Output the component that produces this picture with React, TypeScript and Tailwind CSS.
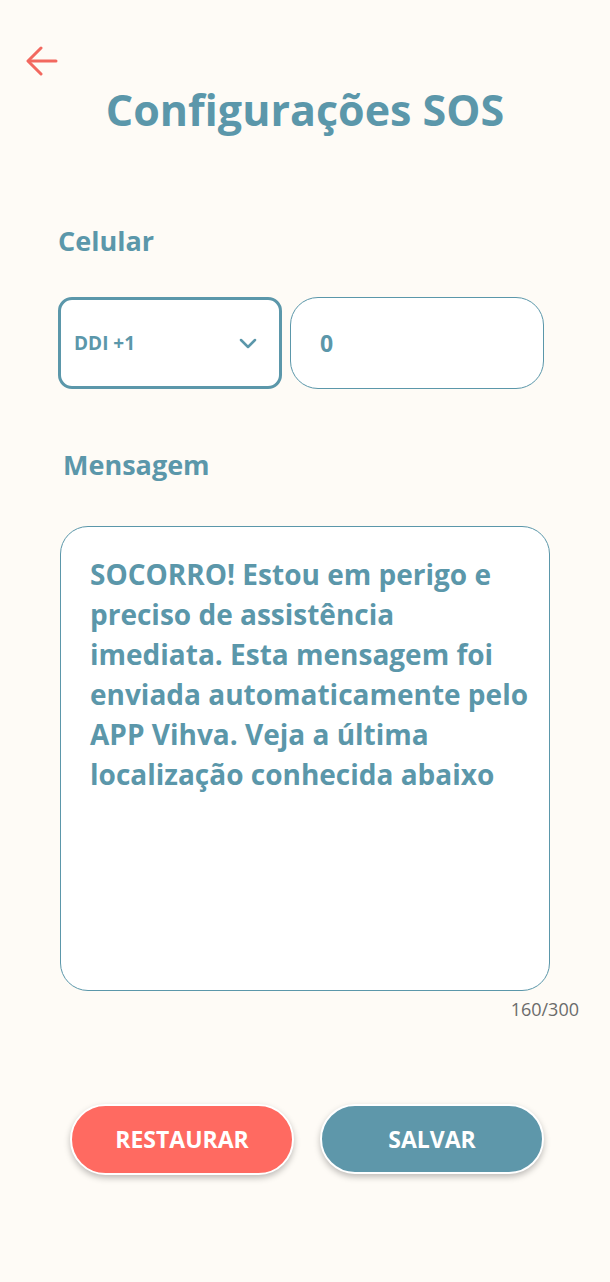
import React from "react";

const teal = "text-[#5b97aa]";

function BackArrow() {
  return (
    <svg width="34" height="30" viewBox="0 0 34 30" fill="none" stroke="#f2685f" strokeWidth="3" strokeLinecap="round" strokeLinejoin="round">
      <path d="M31 15H4" />
      <path d="M16 2L3 15l13 13" />
    </svg>
  );
}

function Chevron() {
  return (
    <svg width="18" height="12" viewBox="0 0 18 12" fill="none" stroke="#5b97aa" strokeWidth="2.5" strokeLinecap="round" strokeLinejoin="round">
      <path d="M2 3l7 7 7-7" />
    </svg>
  );
}

const lines = [
  "SOCORRO! Estou em perigo e",
  "preciso de assistência",
  "imediata. Esta mensagem foi",
  "enviada automaticamente pelo",
  "APP Vihva. Veja a última",
  "localização conhecida abaixo",
];

export default function App() {
  return (
    <div className="w-[610px] h-[1282px] bg-[#fefbf6] font-['Open_Sans',sans-serif] flex flex-col">
      <div className="pl-[25px] pt-[46px] h-[80px]">
        <BackArrow />
      </div>
      <h1 className={`text-center text-[43px] font-bold leading-none ${teal} mt-[8px]`}>
        Configurações SOS
      </h1>

      <div className={`ml-[58px] mt-[96px] text-[27px] font-bold leading-none ${teal}`}>Celular</div>

      <div className="flex ml-[58px] mt-[43px] gap-[8px]">
        <div className="w-[224px] h-[92px] bg-white border-[3px] border-[#5b97aa] rounded-[14px] flex items-center justify-between pl-[13px] pr-[22px]">
          <span className={`text-[19px] font-bold ${teal}`}>DDI +1</span>
          <Chevron />
        </div>
        <div className="w-[254px] h-[92px] bg-white border-[1.5px] border-[#5b97aa] rounded-[28px] flex items-center pl-[29px]">
          <span className={`text-[23px] font-bold ${teal}`}>0</span>
        </div>
      </div>

      <div className={`ml-[63px] mt-[62px] text-[27px] font-bold leading-none ${teal}`}>Mensagem</div>

      <div className="ml-[60px] mt-[48px] w-[490px] h-[465px] bg-white border-[1.5px] border-[#5b97aa] rounded-[28px] pl-[29px] pr-[10px] pt-[27px]">
        <p className={`text-[28px] font-bold leading-[40px] ${teal}`}>
          {lines.map((l, i) => (
            <React.Fragment key={i}>
              {l}
              {i < lines.length - 1 && <br />}
            </React.Fragment>
          ))}
        </p>
      </div>
      <div className="w-[579px] text-right text-[18px] text-[#6b6b6b] mt-[9px] leading-none">160/300</div>

      <div className="flex ml-[70px] mt-[86px] gap-[26px]">
        <button className="w-[224px] h-[71px] rounded-full bg-[#ff6a61] border-2 border-white text-white text-[23px] font-bold shadow-[0_3px_6px_rgba(0,0,0,0.25)]">
          RESTAURAR
        </button>
        <button className="w-[224px] h-[70px] rounded-full bg-[#5e97aa] border-2 border-white text-white text-[23px] font-bold shadow-[0_3px_6px_rgba(0,0,0,0.25)]">
          SALVAR
        </button>
      </div>
    </div>
  );
}
